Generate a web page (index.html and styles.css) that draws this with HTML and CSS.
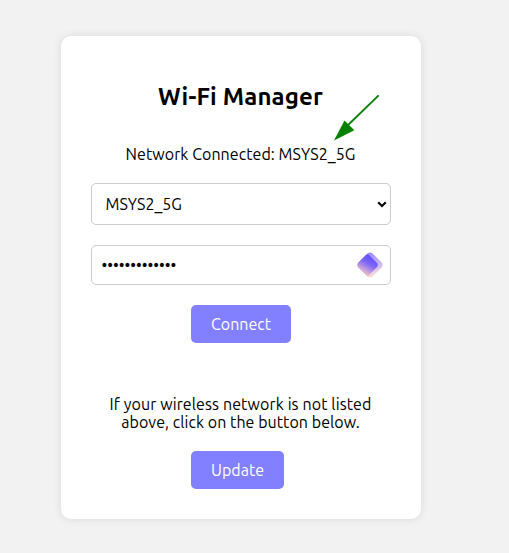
FILE: index.html
```html
<!DOCTYPE html>
<html lang="en">
<head>
<meta charset="utf-8">
<title>Wi-Fi Manager</title>
<link rel="stylesheet" href="styles.css">
</head>
<body>
<main class="card">
  <h1 class="title">Wi-Fi Manager</h1>
  <p class="status">Network Connected: MSYS2_5G</p>
  <svg class="arrow" viewBox="0 0 50 50" aria-hidden="true">
    <path d="M48.7 .3L16 32" stroke="#098009" stroke-width="1.8"/>
    <path d="M4 45.5L14.5 25.5L24.3 35.2Z" fill="#008000"/>
  </svg>
  <form class="form">
    <div class="select">
      <span class="network">MSYS2_5G</span>
      <svg class="chevron" viewBox="0 0 10 7"><path d="M1.2 1.2L5 5L8.8 1.2" fill="none" stroke="#000" stroke-width="2"/></svg>
    </div>
    <div class="field">
      <input class="password" type="password" value="1234567890123" aria-label="Password">
      <svg class="vault" viewBox="0 0 26 26">
        <defs>
          <linearGradient id="front" x1=".8" y1=".15" x2=".35" y2="1">
            <stop offset="0" stop-color="#604cff"/><stop offset=".38" stop-color="#8068f5"/><stop offset=".72" stop-color="#c9a1dc"/><stop offset="1" stop-color="#ffd3b8"/>
          </linearGradient>
          <linearGradient id="back" x1=".4" y1="0" x2=".6" y2="1">
            <stop offset="0" stop-color="#9b87ff"/><stop offset=".55" stop-color="#cbb9f5"/><stop offset="1" stop-color="#ffe0d2"/>
          </linearGradient>
        </defs>
        <path d="M10.5 1.4Q13-.6 15.5 1.4L24.6 10.5Q26.6 13 24.6 15.5L15.5 24.6Q13 26.6 10.5 24.6L1.4 15.5Q-.6 13 1.4 10.5Z" fill="url(#back)"/>
        <path d="M8.5 3.4Q10.5 1.8 12.5 3.4L20 11Q21.6 13 20 15L10.5 24.6L1.4 15.5Q-.6 13 1.4 10.5Z" fill="url(#front)"/>
      </svg>
    </div>
    <button class="button connect" type="button">Connect</button>
  </form>
  <p class="hint"><span class="line first">If your wireless network is not listed</span><span class="line second">above, click on the button below.</span></p>
  <button class="button update" type="button">Update</button>
</main>
</body>
</html>
```
FILE: styles.css
```css
* { box-sizing: border-box; }
body {
  margin: 0;
  height: 553px;
  overflow: hidden;
  background: #f2f2f2;
  font-family: Ubuntu, "Noto Sans", sans-serif;
  font-size: 16px;
  line-height: 18px;
  color: #000;
}
.card {
  position: relative;
  display: flow-root;
  width: 360px;
  height: 483px;
  margin: 36px 0 0 61px;
  padding: 47px 30px 30px;
  background: #fff;
  border-radius: 10px;
  box-shadow: 0 0 10px rgba(0, 0, 0, .1);
}
.title {
  margin: 0 1px 0 0;
  font-size: 24px;
  line-height: 28px;
  text-align: center;
  white-space: nowrap;
  letter-spacing: .15px;
}
.status { margin: 34px 1px 20px 0; text-align: center; white-space: nowrap; letter-spacing: .06px; }
.arrow { position: absolute; left: 269px; top: 59px; width: 50px; height: 50px; }
.select, .field {
  display: flex;
  align-items: center;
  justify-content: space-between;
  border: 1px solid #ccc;
  border-radius: 5px;
}
.select { height: 42px; padding: 0 3px 0 13.5px; margin-bottom: 20px; }
.field { height: 40px; padding: 0 7px 0 9.5px; margin-bottom: 20px; }
.chevron { width: 10px; height: 7px; }
.vault { width: 26px; height: 26px; }
.password {
  flex: 1;
  min-width: 0;
  height: 18px;
  padding: 0;
  border: 0;
  outline: 0;
  background: none;
  font: inherit;
  color: #000;
}
.button {
  display: block;
  height: 38px;
  margin: 0 0 0 100px;
  padding: 0;
  border: 0;
  border-radius: 5px;
  background: #8280ff;
  color: #fff;
  font: inherit;
  text-align: center;
}
.connect { width: 100px; }
.update { width: 93px; }
.hint { margin: 52px 1px 20px 0; text-align: center; }
.line { display: block; white-space: nowrap; }
.first { letter-spacing: .11px; }
.second { letter-spacing: .05px; }
```
